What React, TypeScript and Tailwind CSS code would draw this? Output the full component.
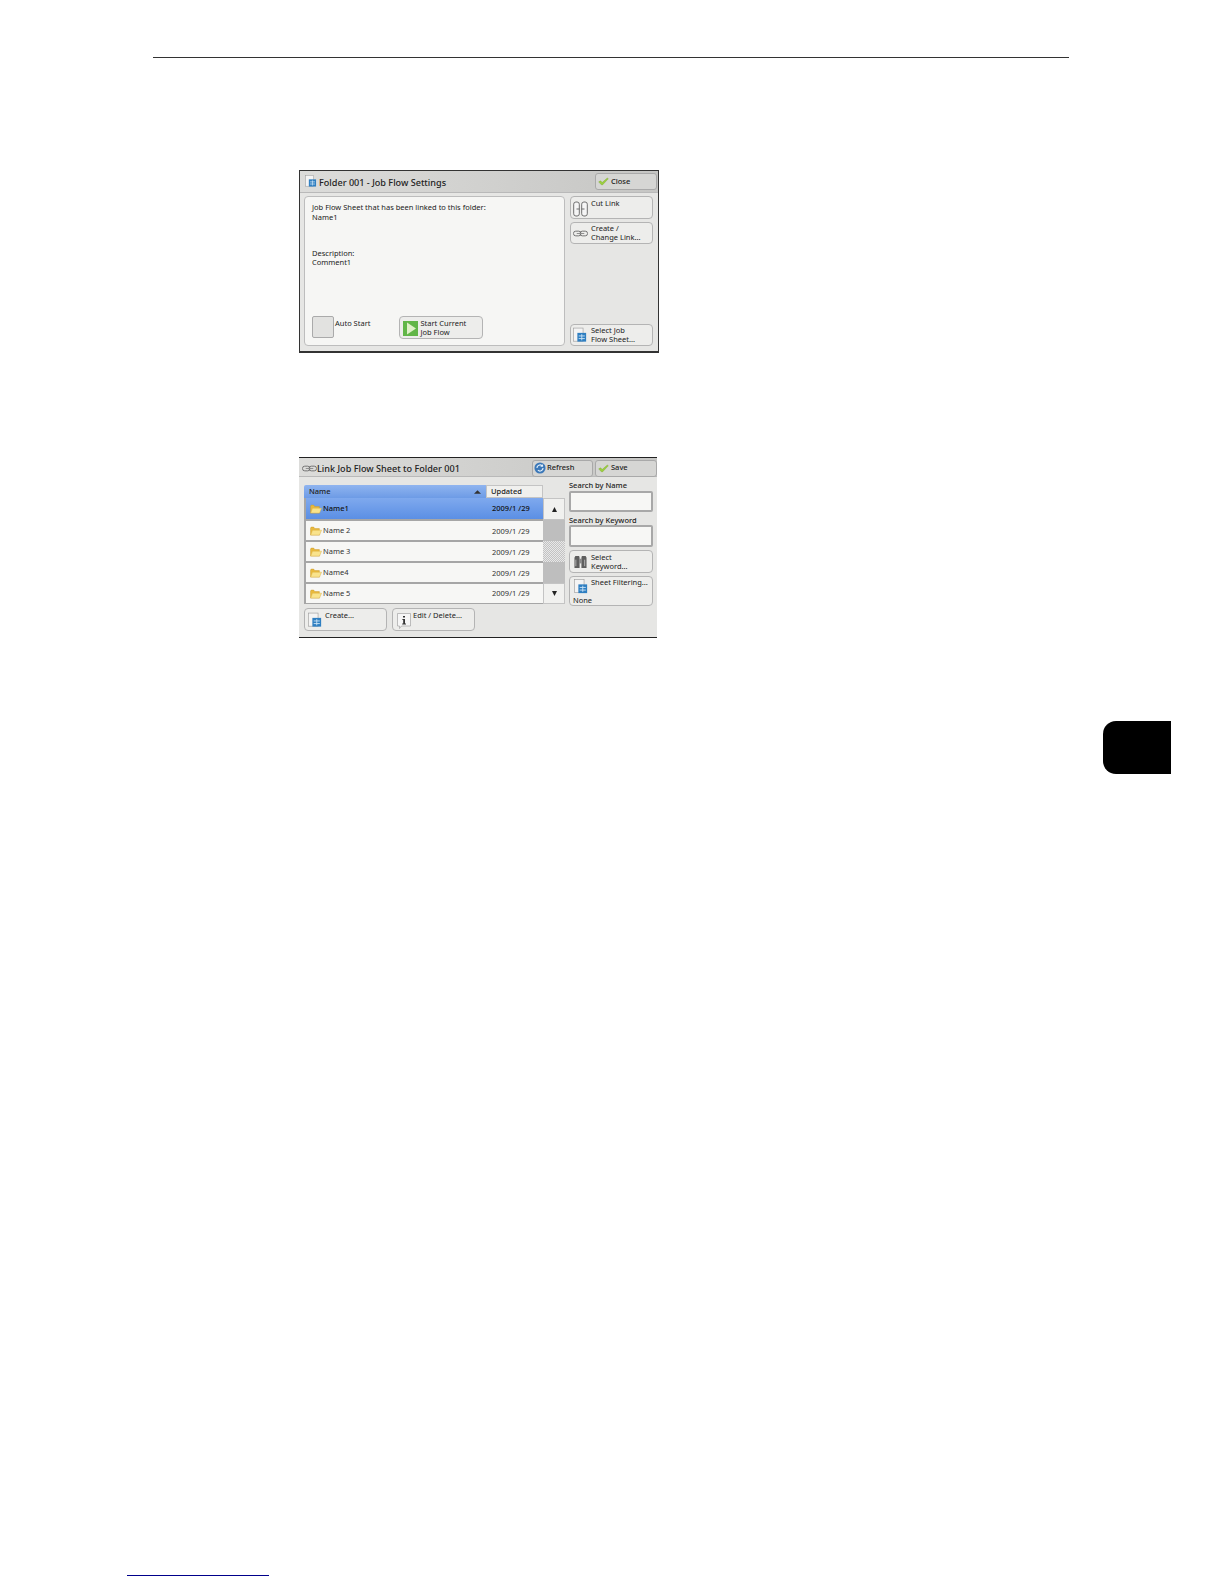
import React from "react";

const FONT = "font-['Noto_Sans',sans-serif]";

function SheetIcon({ className = "" }: { className?: string }) {
  return (
    <svg viewBox="0 0 16 18" className={className}>
      <rect x="0.5" y="0.5" width="11" height="15" fill="#f4f4f4" stroke="#9a9a9a" strokeWidth="0.7" />
      <rect x="5" y="6" width="10" height="10" fill="#2f7fc1" />
      <path d="M6.5 9.5h7M6.5 12.5h7M10 7.5v7" stroke="#cfe6f7" strokeWidth="1" />
    </svg>
  );
}

function FolderIcon() {
  return (
    <svg viewBox="0 0 13 11" className="w-[12px] h-[10px] shrink-0">
      <path d="M0.5 2.2 L0.5 10 L10.2 10 L10.2 2.8 L5 2.8 L4 1.2 L1.2 1.2 Z" fill="#e9b93c" stroke="#c99a2a" strokeWidth="0.5" />
      <path d="M0.7 10 L2.6 4.6 L12.6 4.6 L10.4 10 Z" fill="#f9e38c" stroke="#d9b24a" strokeWidth="0.5" />
    </svg>
  );
}

function CheckIcon() {
  return (
    <svg viewBox="0 0 16 12" className="w-[11px] h-[9px] shrink-0">
      <path d="M1 6.5 L4 5 L6 7.5 L13.5 1 L15 2 L6.5 11 L4.5 10.5 Z" fill="#9ccf3e" stroke="#6f9f2a" strokeWidth="0.5" />
    </svg>
  );
}

function LinkIcon() {
  return (
    <svg viewBox="0 0 16 7" className="w-[15px] h-[7px] shrink-0">
      <rect x="0.5" y="1" width="8" height="5" rx="2.4" fill="none" stroke="#6e6e6e" strokeWidth="1" />
      <rect x="7.5" y="1" width="8" height="5" rx="2.4" fill="none" stroke="#6e6e6e" strokeWidth="1" />
      <path d="M4 3.5h8" stroke="#8a8a8a" strokeWidth="1" />
    </svg>
  );
}

function CutLinkIcon() {
  return (
    <svg viewBox="0 0 15 16" className="w-[15px] h-[16px] shrink-0">
      <rect x="0.7" y="1" width="5.6" height="14" rx="2.2" fill="#f5f5f5" stroke="#6e6e6e" strokeWidth="1" />
      <rect x="8.7" y="1" width="5.6" height="14" rx="2.2" fill="#f5f5f5" stroke="#6e6e6e" strokeWidth="1" />
      <path d="M3.5 8h3M8.5 8h3" stroke="#6e6e6e" strokeWidth="1" />
    </svg>
  );
}

function PlayIcon() {
  return (
    <svg viewBox="0 0 15 15" className="w-[15px] h-[15px] shrink-0">
      <rect width="15" height="15" fill="#62b648" />
      <path d="M4 1.5 L13 7.5 L4 13.5 Z" fill="#dff0c8" />
    </svg>
  );
}

function RefreshIcon() {
  return (
    <svg viewBox="0 0 13 13" className="w-[12px] h-[12px] shrink-0 -mx-[1px]">
      <circle cx="6.5" cy="6.5" r="6" fill="#3c78b8" />
      <path d="M3.2 6.5a3.3 3.3 0 0 1 5.6-2.3 M9.8 6.5a3.3 3.3 0 0 1-5.6 2.3" stroke="#e4f0fa" strokeWidth="1.3" fill="none" />
      <path d="M9.8 2.2v3h-3z" fill="#e4f0fa" />
    </svg>
  );
}

function BinocularIcon() {
  return (
    <svg viewBox="0 0 14 15" className="w-[13px] h-[14px] shrink-0">
      <path d="M0.5 3 L1.5 1 H5.5 L6 3 V14 H0.5 Z" fill="#5e5e5e" />
      <path d="M8 3 L8.5 1 H12.5 L13.5 3 V14 H8 Z" fill="#5e5e5e" />
      <rect x="5.5" y="4" width="3" height="5" fill="#8a8a8a" />
      <path d="M2 5v7M11.5 5v7" stroke="#b5b5b5" strokeWidth="1" />
    </svg>
  );
}

function InfoIcon() {
  return (
    <svg viewBox="0 0 14 16" className="w-[14px] h-[16px] shrink-0">
      <path d="M0.5 0.5 H13.5 V13 H4.5 L2.5 15.5 V13 H0.5 Z" fill="#f6f6f6" stroke="#a5a5a5" strokeWidth="0.7" />
      <path d="M6 3h2v1.6H6zM5.4 6h2.6v4.5h1v1H5.2v-1h1V7H5.4z" fill="#333" />
    </svg>
  );
}

function Btn({ className = "", children }: { className?: string; children: React.ReactNode }) {
  return (
    <div className={`border border-[#b4b4b4] rounded-[4px] bg-[#ededeb] text-[#222] text-[7.5px] leading-[9px] ${className}`}>
      {children}
    </div>
  );
}

function TitleBtn({ icon, label, width }: { icon: React.ReactNode; label: string; width: string }) {
  return (
    <div className={`${width} h-[17px] flex items-center gap-[2px] pl-[2px] border border-[#a9a9a9] rounded-[3px] bg-[#d6d6d4] text-[#222] text-[7.5px] font-medium`}>
      {icon}
      <span>{label}</span>
    </div>
  );
}

function Row({ name, active, offset, tall }: { name: string; active?: boolean; offset?: boolean; tall?: boolean }) {
  return (
    <div
      className={`${tall ? "h-[21px]" : "h-[19px]"} flex items-center pl-[4px] text-[7.5px] ${
        active ? "bg-gradient-to-b from-[#7fa9ee] to-[#5b8fe4] text-[#111] font-medium" : "bg-[#f7f7f5] text-[#333]"
      }`}
    >
      <FolderIcon />
      <span className="ml-[1px] w-[169px]">{name}</span>
      <span className={offset ? "mt-[2px]" : ""}>2009/1 /29</span>
    </div>
  );
}

export default function App() {
  return (
    <div className={`${FONT} relative w-[1224px] h-[1584px] bg-white flex flex-col overflow-hidden`}>
      <div className="ml-[153px] mt-[57px] w-[916px] h-px bg-[#333]" />

      {/* Panel 1 */}
      <div className="ml-[299px] mt-[112px] w-[360px] h-[183px] border border-[#333] border-b-2 bg-[#e6e6e4] flex flex-col">
        <div className="h-[22px] shrink-0 flex items-center justify-between pl-[5px] pr-[1px] bg-gradient-to-r from-[#dcdcda] to-[#c6c6c4] border-b border-[#b9b9b9]">
          <div className="flex items-center gap-[2px]">
            <SheetIcon className="w-[12px] h-[13px]" />
            <span className="text-[9.1px] font-medium text-[#222] mt-[2px]">Folder 001 - Job Flow Settings</span>
          </div>
          <TitleBtn icon={<CheckIcon />} label="Close" width="w-[62px]" />
        </div>
        <div className="flex flex-1 pt-[3px] pl-[4px] gap-[5px]">
          <div className="w-[261px] h-[150px] border border-[#bdbdbd] rounded-[4px] bg-[#f6f6f4] flex flex-col pl-[7px] text-[7.5px] leading-[9px] text-[#222]">
            <div className="mt-[6px]">Job Flow Sheet that has been linked to this folder:</div>
            <div className="mt-[1px]">Name1</div>
            <div className="mt-[27px]">Description:</div>
            <div>Comment1</div>
            <div className="flex mt-[49px]">
              <div className="w-[22px] h-[22px] border border-[#aaa] rounded-[2px] bg-[#e2e2e0]" />
              <span className="ml-[1px] mt-[3px]">Auto Start</span>
              <Btn className="ml-[29px] w-[84px] h-[23px] flex items-center pl-[3px] gap-[2px]">
                <span className="mt-[2px]"><PlayIcon /></span>
                <span>Start Current<br />Job Flow</span>
              </Btn>
            </div>
          </div>
          <div className="w-[83px] flex flex-col">
            <Btn className="h-[23px] flex gap-[3px] pl-[2px] pt-[2px]">
              <span className="mt-[2px]"><CutLinkIcon /></span>
              <span>Cut Link</span>
            </Btn>
            <Btn className="mt-[3px] h-[22px] flex items-center gap-[3px] pl-[2px]">
              <LinkIcon />
              <span>Create /<br />Change Link...</span>
            </Btn>
            <Btn className="mt-[80px] h-[22px] flex items-center gap-[4px] pl-[2px]">
              <SheetIcon className="w-[14px] h-[17px] shrink-0" />
              <span>Select Job<br />Flow Sheet...</span>
            </Btn>
          </div>
        </div>
      </div>

      {/* Panel 2 */}
      <div className="ml-[299px] mt-[104px] w-[358px] h-[181px] border-t border-b border-[#222] bg-[#e6e6e4] flex flex-col">
        <div className="h-[19px] shrink-0 flex items-center justify-between pl-[3px] pr-0 bg-gradient-to-r from-[#dcdcda] to-[#c6c6c4] border-b border-[#b9b9b9]">
          <div className="flex items-center mt-[3px]">
            <LinkIcon />
            <span className="text-[9.1px] font-medium text-[#222]">Link Job Flow Sheet to Folder 001</span>
          </div>
          <div className="flex gap-[2px] mt-[2px]">
            <TitleBtn icon={<RefreshIcon />} label="Refresh" width="w-[61px]" />
            <TitleBtn icon={<CheckIcon />} label="Save" width="w-[62px]" />
          </div>
        </div>
        <div className="flex pl-[5px] pt-[8px] gap-[4px]">
          <div className="w-[261px] flex flex-col">
            <div className="flex h-[13px] text-[7.5px] font-medium text-[#222]">
              <div className="w-[182px] bg-gradient-to-b from-[#8fb4ef] to-[#6d9be6] rounded-tl-[2px] flex items-center justify-between pl-[5px] pr-[5px]">
                <span>Name</span>
                <svg viewBox="0 0 8 4" className="w-[7px] h-[4px]"><path d="M0 4 L4 0 L8 4 Z" fill="#333" /></svg>
              </div>
              <div className="w-[57px] bg-[#f0f0ee] border border-[#c4c4c4] flex items-center pl-[4px]">Updated</div>
            </div>
            <div className="flex">
              <div className="w-[239px] bg-[#a6a6a6] pl-[2px] pb-[1px] flex flex-col gap-[2px]">
                <Row name="Name1" active tall />
                <Row name="Name 2" offset />
                <Row name="Name 3" offset />
                <Row name="Name4" offset />
                <Row name="Name 5" />
              </div>
              <div className="w-[22px] flex flex-col">
                <div className="h-[22px] bg-[#f1f1ef] border border-[#c4c4c4] flex items-center justify-center">
                  <svg viewBox="0 0 6 6" className="w-[5px] h-[5px]"><path d="M0 6 L3 0 L6 6 Z" fill="#222" /></svg>
                </div>
                <div className="h-[21px] bg-[#bebebe]" />
                <div className="h-[21px] bg-[repeating-conic-gradient(#c2c2c2_0_25%,#e8e8e8_0_50%)] bg-[length:2px_2px]" />
                <div className="h-[21px] bg-[#bebebe]" />
                <div className="h-[21px] bg-[#f1f1ef] border border-[#c4c4c4] flex items-center justify-center">
                  <svg viewBox="0 0 6 6" className="w-[5px] h-[5px]"><path d="M0 0 L3 6 L6 0 Z" fill="#222" /></svg>
                </div>
              </div>
            </div>
          </div>
          <div className="w-[84px] flex flex-col text-[7.5px] leading-[9px] text-[#222] font-medium -mt-[4px]">
            <div className="h-[9px]">Search by Name</div>
            <div className="mt-[1px] h-[21px] border-2 border-[#a8a8a8] rounded-[2px] bg-[#f7f7f5]" />
            <div className="mt-[4px] h-[9px]">Search by Keyword</div>
            <div className="h-[22px] border-2 border-[#a8a8a8] rounded-[2px] bg-[#f7f7f5]" />
            <Btn className="mt-[3px] h-[23px] flex items-center gap-[4px] pl-[4px] font-normal">
              <BinocularIcon />
              <span>Select<br />Keyword...</span>
            </Btn>
            <Btn className="mt-[3px] h-[30px] flex flex-col pl-[3px] font-normal">
              <div className="flex gap-[3px] pl-[1px]">
                <SheetIcon className="w-[14px] h-[16px] mt-[2px] shrink-0" />
                <span className="mt-[1px]">Sheet Filtering...</span>
              </div>
              <span className="mt-[1px]">None</span>
            </Btn>
          </div>
        </div>
        <div className="flex gap-[5px] pl-[5px] mt-[2px]">
          <Btn className="w-[83px] h-[23px] flex gap-[3px] pl-[3px] pt-[2px]">
            <SheetIcon className="w-[14px] h-[17px] mt-[1px] shrink-0" />
            <span>Create...</span>
          </Btn>
          <Btn className="w-[83px] h-[23px] flex gap-[2px] pl-[4px] pt-[2px]">
            <span className="mt-[2px]"><InfoIcon /></span>
            <span>Edit / Delete...</span>
          </Btn>
        </div>
      </div>

      {/* Chapter tab */}
      <div className="mt-[83px] self-end mr-[53px] w-[68px] h-[53px] bg-black rounded-l-[13px]" />

      {/* Footnote rule */}
      <div className="mt-auto mb-[8px] ml-[127px] w-[142px] h-px bg-[#00008b]" />
    </div>
  );
}
